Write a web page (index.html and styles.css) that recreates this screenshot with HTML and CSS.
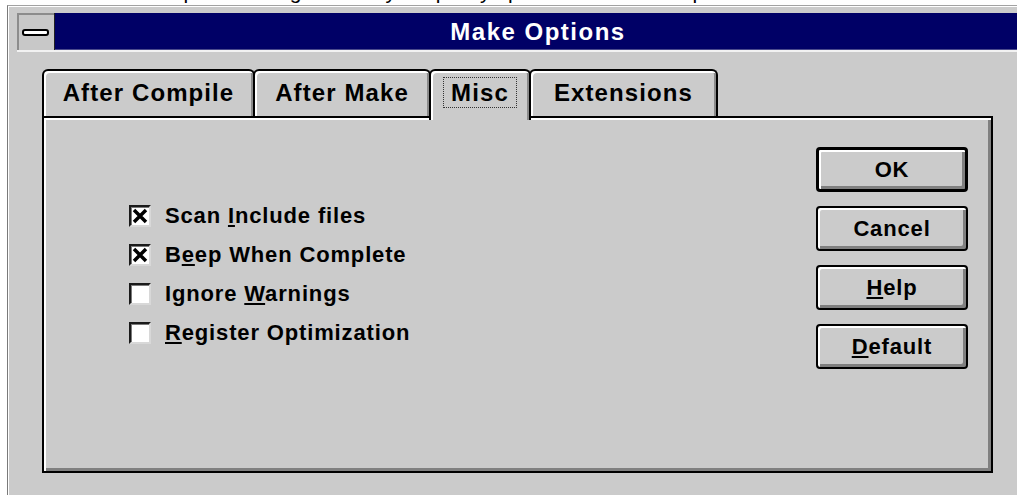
FILE: index.html
```html
<!DOCTYPE html>
<html lang="en">
<head>
<meta charset="utf-8">
<title>Make Options</title>
<link rel="stylesheet" href="styles.css">
</head>
<body>
<p class="intro"><span>The Make Options dialog box lets you specify options for the Make process.</span></p>
<div class="window">
  <div class="titlebar">
    <div class="sysmenu"><span class="sysbar"></span></div>
    <div class="caption">Make Options</div>
  </div>
  <div class="client">
    <div class="tabs">
      <div class="tab tab-compile">After Compile</div>
      <div class="tab tab-make">After Make</div>
      <div class="tab tab-misc active"><span class="focus">Misc</span></div>
      <div class="tab tab-ext">Extensions</div>
    </div>
    <div class="panel">
      <div class="checks">
        <div class="check">
          <span class="box"><svg viewBox="0 0 18 18" width="18" height="18"><path d="M3 3 L15 15 M15 3 L3 15" stroke="#000" stroke-width="3.5" fill="none"/></svg></span>
          <span class="label">Scan <u>I</u>nclude files</span>
        </div>
        <div class="check">
          <span class="box"><svg viewBox="0 0 18 18" width="18" height="18"><path d="M3 3 L15 15 M15 3 L3 15" stroke="#000" stroke-width="3.5" fill="none"/></svg></span>
          <span class="label">B<u>e</u>ep When Complete</span>
        </div>
        <div class="check">
          <span class="box"></span>
          <span class="label">Ignore <u>W</u>arnings</span>
        </div>
        <div class="check">
          <span class="box"></span>
          <span class="label"><u>R</u>egister Optimization</span>
        </div>
      </div>
      <div class="buttons">
        <div class="btn btn-default">OK</div>
        <div class="btn">Cancel</div>
        <div class="btn"><u>H</u>elp</div>
        <div class="btn"><u>D</u>efault</div>
      </div>
    </div>
  </div>
</div>
</body>
</html>
```
FILE: styles.css
```css
html, body {
  margin: 0;
  background: #fff;
  overflow: hidden;
}

body {
  width: 1017px;
  height: 495px;
  font-family: "Liberation Sans", Arial, sans-serif;
  color: #000;
}

/* line of help text above the dialog, scrolled mostly out of view */
.intro {
  margin: 0;
  height: 5px;
  overflow: hidden;
  padding-left: 68px;
  font-size: 21px;
  line-height: 24px;
  white-space: nowrap;
}

.intro span {
  display: block;
  margin-top: -20px;
}

/* dialog window frame */
.window {
  box-sizing: border-box;
  margin-left: 7px;
  width: 1014px;
  height: 490px;
  padding: 7px 0 0 9px;
  border-top: 1px solid #a2a2a2;
  border-left: 1px solid #7a7a7a;
  background: #cbcbcb;
  box-shadow: inset 1px 1px 0 #fff;
}

.titlebar {
  display: flex;
  height: 37px;
  width: 1004px;
  border-bottom: 2px solid #f2f2f2;
}

.sysmenu {
  width: 38px;
  display: flex;
  align-items: center;
  justify-content: center;
  background: #c8c8c8;
  box-shadow: inset 2px 2px 0 #8c8c8c;
  border-right: 1px solid #222;
  box-sizing: border-box;
}

.sysbar {
  width: 27px;
  height: 7px;
  margin-top: 1px;
  box-sizing: border-box;
  background: #fff;
  border: 2px solid #000;
  border-radius: 3px;
}

.caption {
  flex: 1;
  background: #000066;
  color: #fff;
  font-weight: bold;
  font-size: 24px;
  letter-spacing: 1.5px;
  line-height: 37px;
  text-align: center;
  box-shadow: inset 0 -1px 0 #4a4a8c;
}

.client {
  padding: 17px 0 0 25px;
}

/* tab strip */
.tabs {
  display: flex;
  align-items: flex-start;
  height: 47px;
  font-size: 24px;
  font-weight: bold;
  letter-spacing: 1.1px;
}

.tab {
  box-sizing: border-box;
  height: 47px;
  display: flex;
  align-items: center;
  justify-content: center;
  padding-bottom: 2px;
  background: #cbcbcb;
  border: 2px solid #000;
  border-bottom: 0;
  border-radius: 6px 6px 0 0;
  box-shadow: inset 2px 2px 0 #fff, inset -2px 0 0 #8a8a8a;
}

.tab + .tab {
  margin-left: -2px;
}

.tab-compile { width: 213px; }
.tab-make { width: 178px; }
.tab-misc { width: 102px; }
.tab-ext { width: 189px; }

.tab.active {
  position: relative;
  z-index: 1;
  height: 51px;
  padding-bottom: 6px;
  margin-bottom: -4px;
}

.focus {
  padding: 0 7px;
  line-height: 29px;
  border: 1px dotted #333;
}

/* page body of the tabbed dialog */
.panel {
  position: relative;
  box-sizing: border-box;
  width: 951px;
  height: 357px;
  display: flex;
  justify-content: space-between;
  align-items: flex-start;
  padding: 29px 23px 0 85px;
  border: 2px solid #000;
  background: #cbcbcb;
  box-shadow: inset 2px 2px 0 #fff, inset -3px -3px 0 #808080;
}

.checks {
  margin-top: 49px;
  font-size: 22px;
  font-weight: bold;
  letter-spacing: 0.85px;
}

.check {
  display: flex;
  align-items: center;
  height: 39px;
  gap: 14px;
}

.box {
  width: 22px;
  height: 22px;
  flex: none;
  box-sizing: border-box;
  display: flex;
  align-items: center;
  justify-content: center;
  background: #fff;
  border-style: solid;
  border-width: 2px;
  border-color: #1a1a1a #d8d8d8 #d8d8d8 #1a1a1a;
  box-shadow: inset 1px 1px 0 #7a7a7a;
}

.box svg {
  display: block;
  flex: none;
}

u {
  text-decoration-thickness: 2px;
  text-underline-offset: 2px;
}

.buttons {
  display: flex;
  flex-direction: column;
  gap: 14px;
  width: 152px;
}

.btn {
  box-sizing: border-box;
  height: 45px;
  display: flex;
  align-items: center;
  justify-content: center;
  font-size: 22px;
  font-weight: bold;
  letter-spacing: 0.85px;
  background: #cbcbcb;
  border: 2px solid #000;
  border-radius: 4px;
  box-shadow: inset 2px 2px 0 #fff, inset -3px -3px 0 #808080;
}

.btn-default {
  border-width: 3px;
}
```
